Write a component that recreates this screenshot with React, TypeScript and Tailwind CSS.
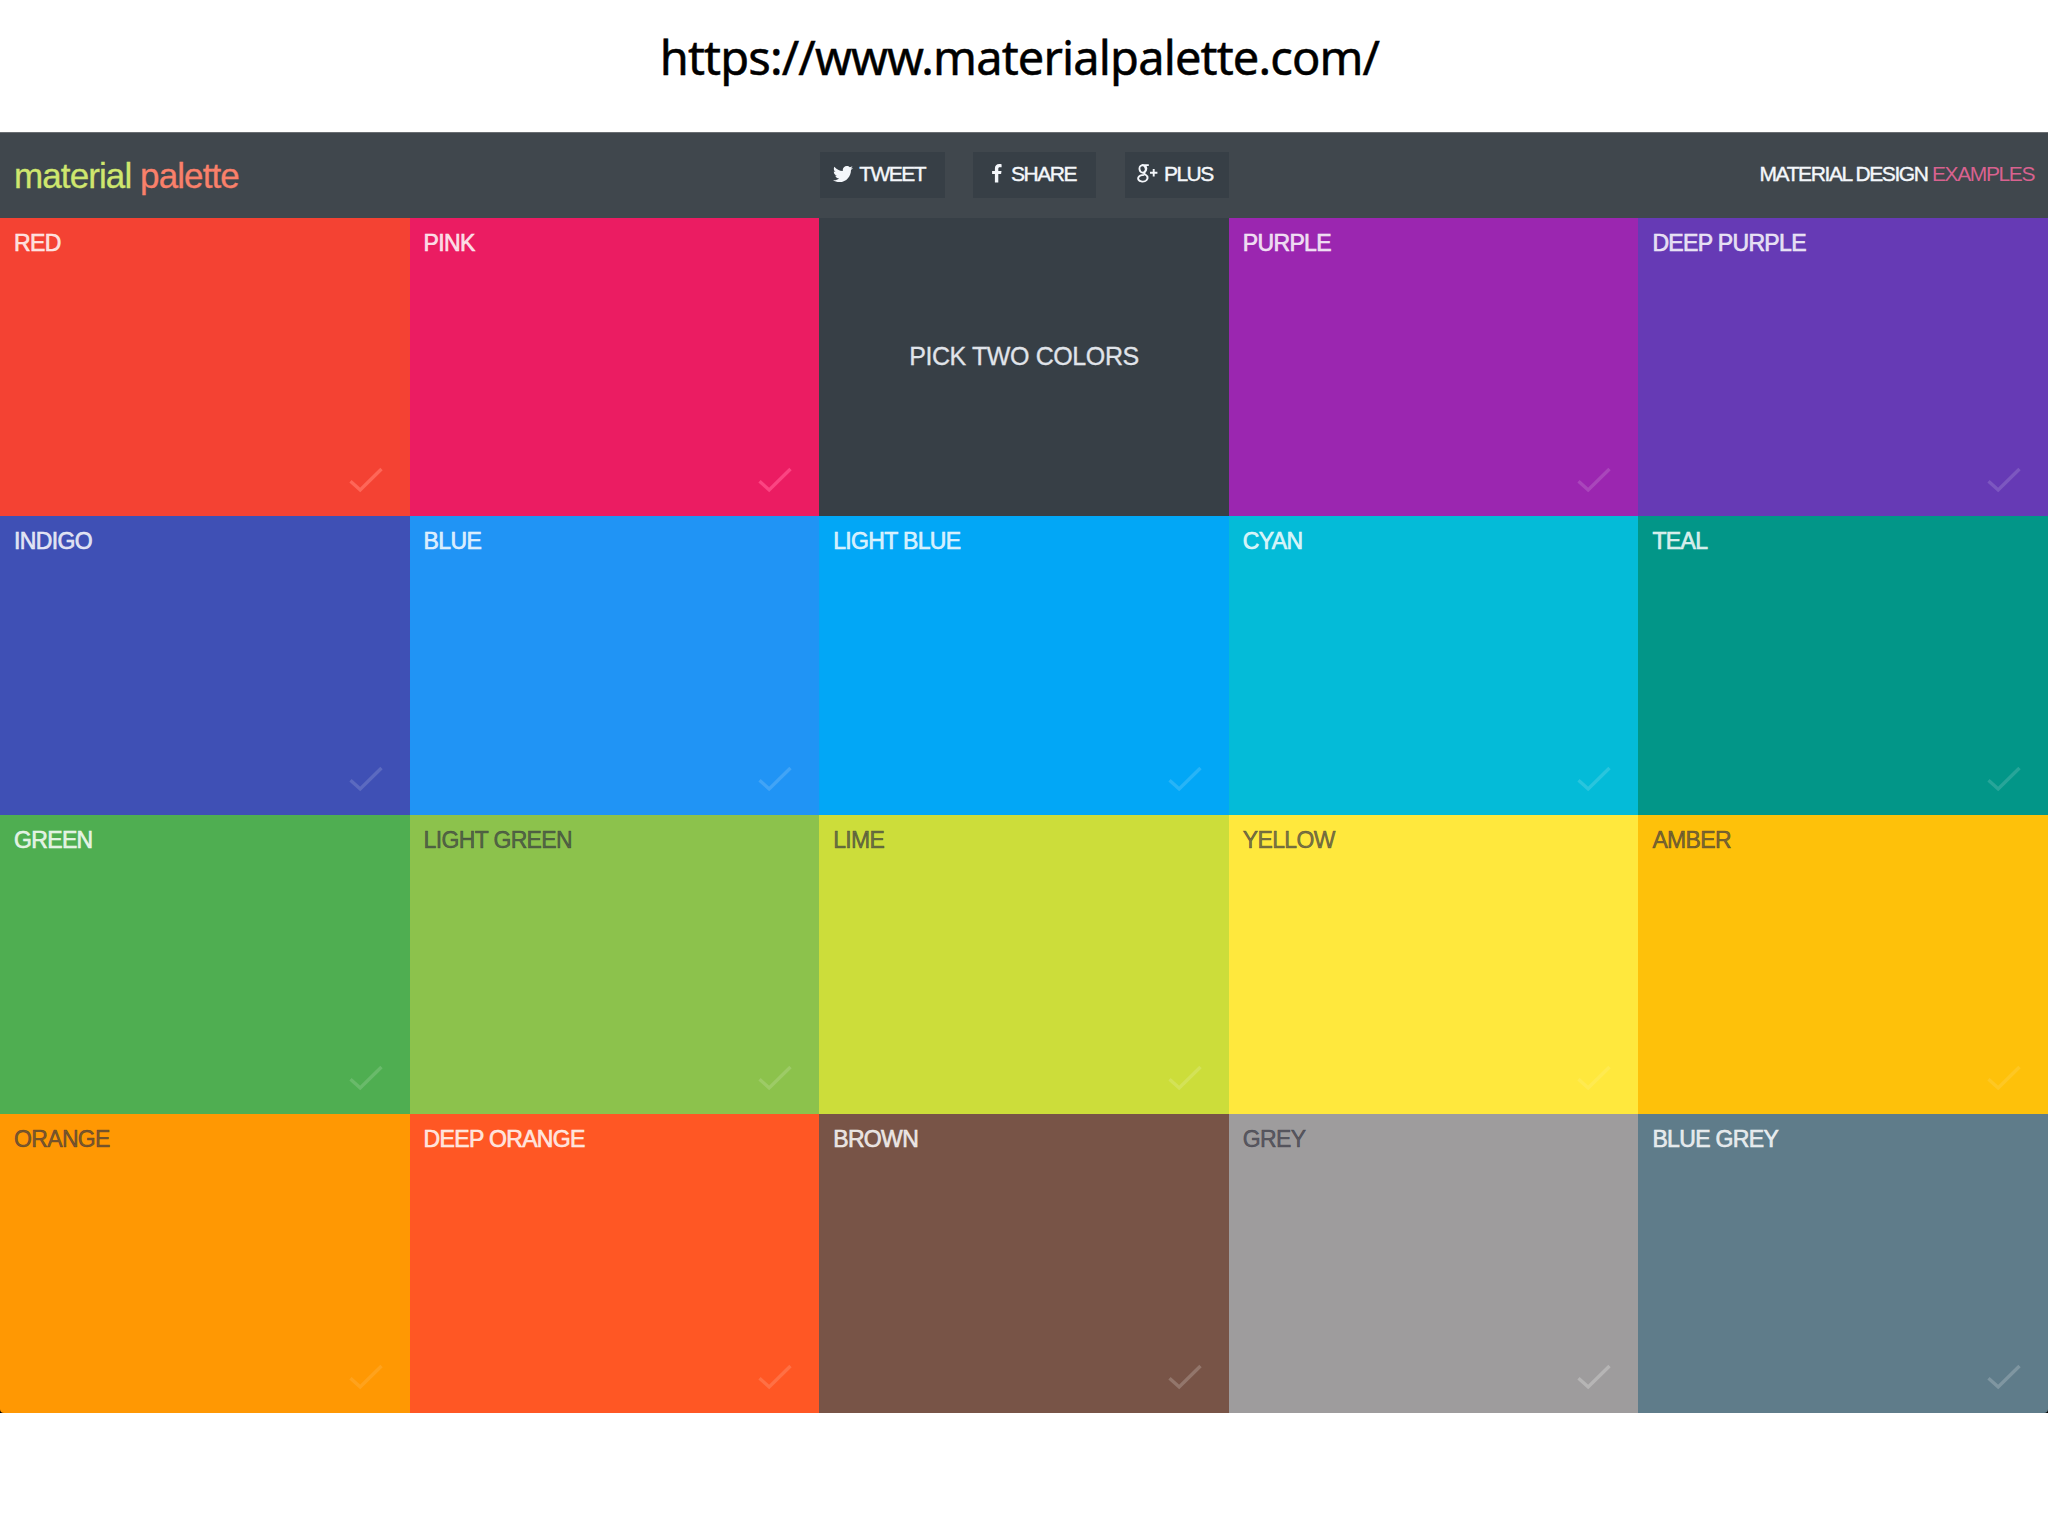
import { FaTwitter, FaFacebookF } from "react-icons/fa";
import type { ReactNode } from "react";

type Swatch = { name: string; bg: string; ink: string; check: string };

const light = "text-white/80";
const dark = "text-[#33333f]/65";
const soft = "text-white/15";

const swatches: (Swatch | null)[] = [
  { name: "RED", bg: "bg-[#f44233]", ink: light, check: "text-[#ff6a5c]/90" },
  { name: "PINK", bg: "bg-[#eb1c62]", ink: light, check: "text-[#fb4482]" },
  null,
  { name: "PURPLE", bg: "bg-[#9b26b0]", ink: light, check: soft },
  { name: "DEEP PURPLE", bg: "bg-[#663ab5]", ink: light, check: soft },
  { name: "INDIGO", bg: "bg-[#3f50b5]", ink: light, check: soft },
  { name: "BLUE", bg: "bg-[#2094f5]", ink: light, check: soft },
  { name: "LIGHT BLUE", bg: "bg-[#02a7f6]", ink: light, check: soft },
  { name: "CYAN", bg: "bg-[#04bbd8]", ink: light, check: soft },
  { name: "TEAL", bg: "bg-[#029688]", ink: light, check: soft },
  { name: "GREEN", bg: "bg-[#4fae51]", ink: light, check: soft },
  { name: "LIGHT GREEN", bg: "bg-[#8cc24c]", ink: dark, check: soft },
  { name: "LIME", bg: "bg-[#ccdd3a]", ink: dark, check: soft },
  { name: "YELLOW", bg: "bg-[#ffe83d]", ink: dark, check: "text-white/10" },
  { name: "AMBER", bg: "bg-[#fec10a]", ink: dark, check: "text-white/10" },
  { name: "ORANGE", bg: "bg-[#ff9803]", ink: dark, check: "text-white/10" },
  { name: "DEEP ORANGE", bg: "bg-[#ff5724]", ink: light, check: "text-white/15" },
  { name: "BROWN", bg: "bg-[#785447]", ink: light, check: "text-white/20" },
  { name: "GREY", bg: "bg-[#9e9c9d]", ink: dark, check: "text-white/25" },
  { name: "BLUE GREY", bg: "bg-[#5f7c8a]", ink: light, check: "text-white/20" },
];

function Check({ className }: { className: string }) {
  return (
    <svg viewBox="0 0 34 26" className={`h-[26px] w-[34px] ${className}`} fill="none" stroke="currentColor" strokeWidth="3.4">
      <path d="M1.5 14.2 L11.2 23 L32.5 2" />
    </svg>
  );
}

function GooglePlus() {
  return (
    <svg viewBox="0 0 21 19" className="mr-[6px] h-[19px] w-[21px]" fill="none" stroke="currentColor" strokeWidth="1.9">
      <ellipse cx="5.6" cy="5" rx="3.1" ry="3.7" transform="rotate(-14 5.6 5)" />
      <path d="M4.8 1.1 H11.8 M8 1.3 C9.6 3 9.9 5.6 8.2 7.3 C6.8 8.6 6.6 9.2 8 10.2 C10.2 11.6 11 12.8 10.4 14.7 C9.6 17.2 6.6 17.9 4.3 17.4 C1.8 16.9 0.6 15.2 1.4 13.4 C2.2 11.7 4.6 11 7.4 10.9" />
      <path d="M13 8.8 H20.4 M16.7 5.1 V12.5" />
    </svg>
  );
}

function ShareButton({ icon, label, className }: { icon: ReactNode; label: string; className: string }) {
  return (
    <div className={`flex h-[46px] items-center bg-[#373f46] pb-[3px] text-[21px] tracking-[-1.5px] ${className}`}>
      {icon}
      <span>{label}</span>
    </div>
  );
}

export default function App() {
  return (
    <div className="flex h-[1536px] w-[2048px] flex-col overflow-hidden bg-white font-['Liberation_Sans',Arial,sans-serif]">
      <h1 className="flex h-[132px] items-center justify-center whitespace-nowrap pb-[17px] pr-[9px] font-['Noto_Sans',sans-serif] text-[47px] tracking-[-0.85px] text-black [-webkit-text-stroke:0.5px_currentColor]">
        https://www.materialpalette.com/
      </h1>
      <main className="flex h-[1280.5px] flex-col bg-black">
        <header className="grid h-[85.5px] shrink-0 grid-cols-5 items-center border-t border-[#6a6e72] bg-[#40474d] text-[#f4f7fb]">
          <div className="col-span-2 pl-[14px] text-[35px] leading-none tracking-[-0.9px] text-[#cfe66e] [-webkit-text-stroke:0.3px_currentColor]">
            material <span className="text-[#f9806a]">palette</span>
          </div>
          <div className="flex [-webkit-text-stroke:0.4px_currentColor]">
            <ShareButton icon={<FaTwitter className="mr-[6px] h-[20px] w-[20px]" />} label="TWEET" className="ml-px w-[125px] pl-[13px]" />
            <ShareButton
              icon={
                <svg viewBox="0 0 10 19" className="mr-[9px] h-[19px] w-[10px]" fill="currentColor">
                  <path d="M9.6 0.2V3.3H7.9C6.6 3.3 6.3 3.9 6.3 4.8V6.9H9.5L9.1 10.1H6.3V18.6H2.9V10.1H0.1V6.9H2.9V4.4C2.9 1.6 4.6 0 7.2 0C8.3 0 9.3 0.1 9.6 0.2Z" />
                </svg>
              }
              label="SHARE"
              className="ml-[28px] w-[123px] pl-[19px]"
            />
            <ShareButton icon={<GooglePlus />} label="PLUS" className="ml-[29px] w-[104px] pl-[12px]" />
          </div>
          <div className="col-span-2 pb-[3px] pr-[14px] text-right text-[21px] tracking-[-1.4px]">
            <span className="[-webkit-text-stroke:0.4px_currentColor]">MATERIAL DESIGN</span> <span className="text-[#d8628f]">EXAMPLES</span>
          </div>
        </header>
        <div className="grid flex-1 grid-cols-5 grid-rows-4 overflow-hidden rounded-b-[4px]">
          {swatches.map((s) =>
            s ? (
              <section key={s.name} className={`flex flex-col justify-between ${s.bg}`}>
                <h2 className={`pl-[14px] pt-[12px] text-[23px] leading-[27px] tracking-[-0.65px] [-webkit-text-stroke:0.6px_currentColor] ${s.ink}`}>
                  {s.name}
                </h2>
                <div className="flex justify-end pb-[23px] pr-[27px]">
                  <Check className={s.check} />
                </div>
              </section>
            ) : (
              <section key="prompt" className="flex items-center justify-center bg-[#373f46] pb-[20px] text-[25px] tracking-[-0.4px] text-[#e0e4ea] [-webkit-text-stroke:0.3px_currentColor]">
                PICK TWO COLORS
              </section>
            )
          )}
        </div>
      </main>
    </div>
  );
}
